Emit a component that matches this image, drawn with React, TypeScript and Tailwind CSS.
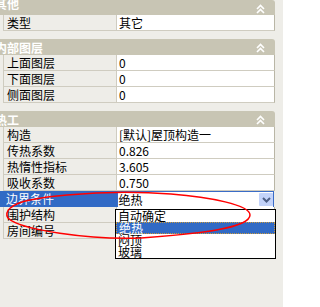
import React from "react";

const font = { fontFamily: '"Noto Sans CJK SC", "Noto Sans", sans-serif' };

function Chevrons() {
  return (
    <svg width="9" height="10" viewBox="0 0 9 10" className="block">
      <polyline points="1,5 4.5,1.5 8,5" fill="none" stroke="#ffffff" strokeWidth="1.6" />
      <polyline points="1,9 4.5,5.5 8,9" fill="none" stroke="#ffffff" strokeWidth="1.6" />
    </svg>
  );
}

function Header({ title, first }: { title: string; first?: boolean }) {
  return (
    <div
      className={
        first
          ? "flex h-[15px] items-start justify-between bg-[#c8c5b4] rounded-tr-[3px]"
          : "flex h-[16px] items-start justify-between bg-[#c8c5b4] rounded-tr-[3px]"
      }
    >
      <span
        className={
          first
            ? "ml-[-5px] mt-[-2px] text-[12px] leading-[12px] font-bold text-white"
            : "ml-[-5px] mt-[3px] text-[12px] leading-[12px] font-bold text-white"
        }
      >
        {title}
      </span>
      <span className="mr-[10px] mt-[4px]">
        <Chevrons />
      </span>
    </div>
  );
}

function Row({ name, value }: { name: string; value?: string }) {
  return (
    <div className="flex h-[16px]">
      <div className="w-[3px]" />
      <div className="w-[114px] border-l border-r border-b border-[#cfccc0] pl-[3px] text-[12px] leading-[15px] text-black">
        {name}
      </div>
      <div className="w-[158px] bg-white border-b border-r border-b-[#cfccc0] border-r-[#b9b6a6] pl-[2px] text-[12px] leading-[15px] text-black whitespace-nowrap overflow-hidden">
        {value}
      </div>
    </div>
  );
}

function SelectedRow() {
  return (
    <div className="flex h-[16px]">
      <div className="w-[117px] bg-[#316ac5] pl-[6px] text-[12px] leading-[15px] text-white">
        边界条件
      </div>
      <div className="w-[158px] h-[17px] bg-white border border-[#3a6cc7] mr-[1px] flex items-center justify-between pl-[1px] text-[12px] leading-[15px] text-black">
        <span>绝热</span>
        <span className="w-[14px] h-[13px] bg-[#c3d3fa] flex items-center justify-center mr-[0px] rounded-[1px]">
          <svg width="9" height="6" viewBox="0 0 9 6">
            <polyline points="1,1 4.5,4.5 8,1" fill="none" stroke="#4d5f86" strokeWidth="2" />
          </svg>
        </span>
      </div>
    </div>
  );
}

export default function App() {
  return (
    <div className="relative w-[283px] h-[307px] bg-[#eeede8] overflow-hidden" style={font}>
      <div className="w-[275px] flex flex-col">
        <Header title="其他" first />
        <Row name="类型" value="其它" />

        <div className="mt-[8px]">
          <Header title="内部图层" />
          <Row name="上面图层" value="0" />
          <Row name="下面图层" value="0" />
          <Row name="侧面图层" value="0" />
        </div>

        <div className="mt-[8px]">
          <Header title="热工" />
          <Row name="构造" value="[默认]屋顶构造一" />
          <Row name="传热系数" value="0.826" />
          <Row name="热惰性指标" value="3.605" />
          <Row name="吸收系数" value="0.750" />
          <SelectedRow />
          <Row name="围护结构" value="" />
          <Row name="房间编号" value="" />
        </div>
      </div>

      <div className="absolute left-[115px] top-[209px] w-[161px] h-[50px] bg-white border border-black flex flex-col text-[12px] leading-[12px] text-black">
        <div className="h-[12px] pl-[2px]">自动确定</div>
        <div className="h-[12px] pl-[2px] bg-[#316ac5] text-white border border-dotted border-[#c99a40] leading-[10px]">绝热</div>
        <div className="h-[12px] pl-[2px]">闷顶</div>
        <div className="h-[12px] pl-[2px]">玻璃</div>
      </div>

      <svg className="absolute left-0 top-0 pointer-events-none" width="283" height="307" viewBox="0 0 283 307">
        <path
          d="M67,195 C100,192 130,191 171,194 C210,197 250,205 250,215 C250,228 200,234 141,238 C90,240 20,230 8,218 C4,212 10,204 30,200 C45,197 55,196 67,195 Z"
          fill="none"
          stroke="#ff0000"
          strokeWidth="1.5"
        />
      </svg>
    </div>
  );
}
